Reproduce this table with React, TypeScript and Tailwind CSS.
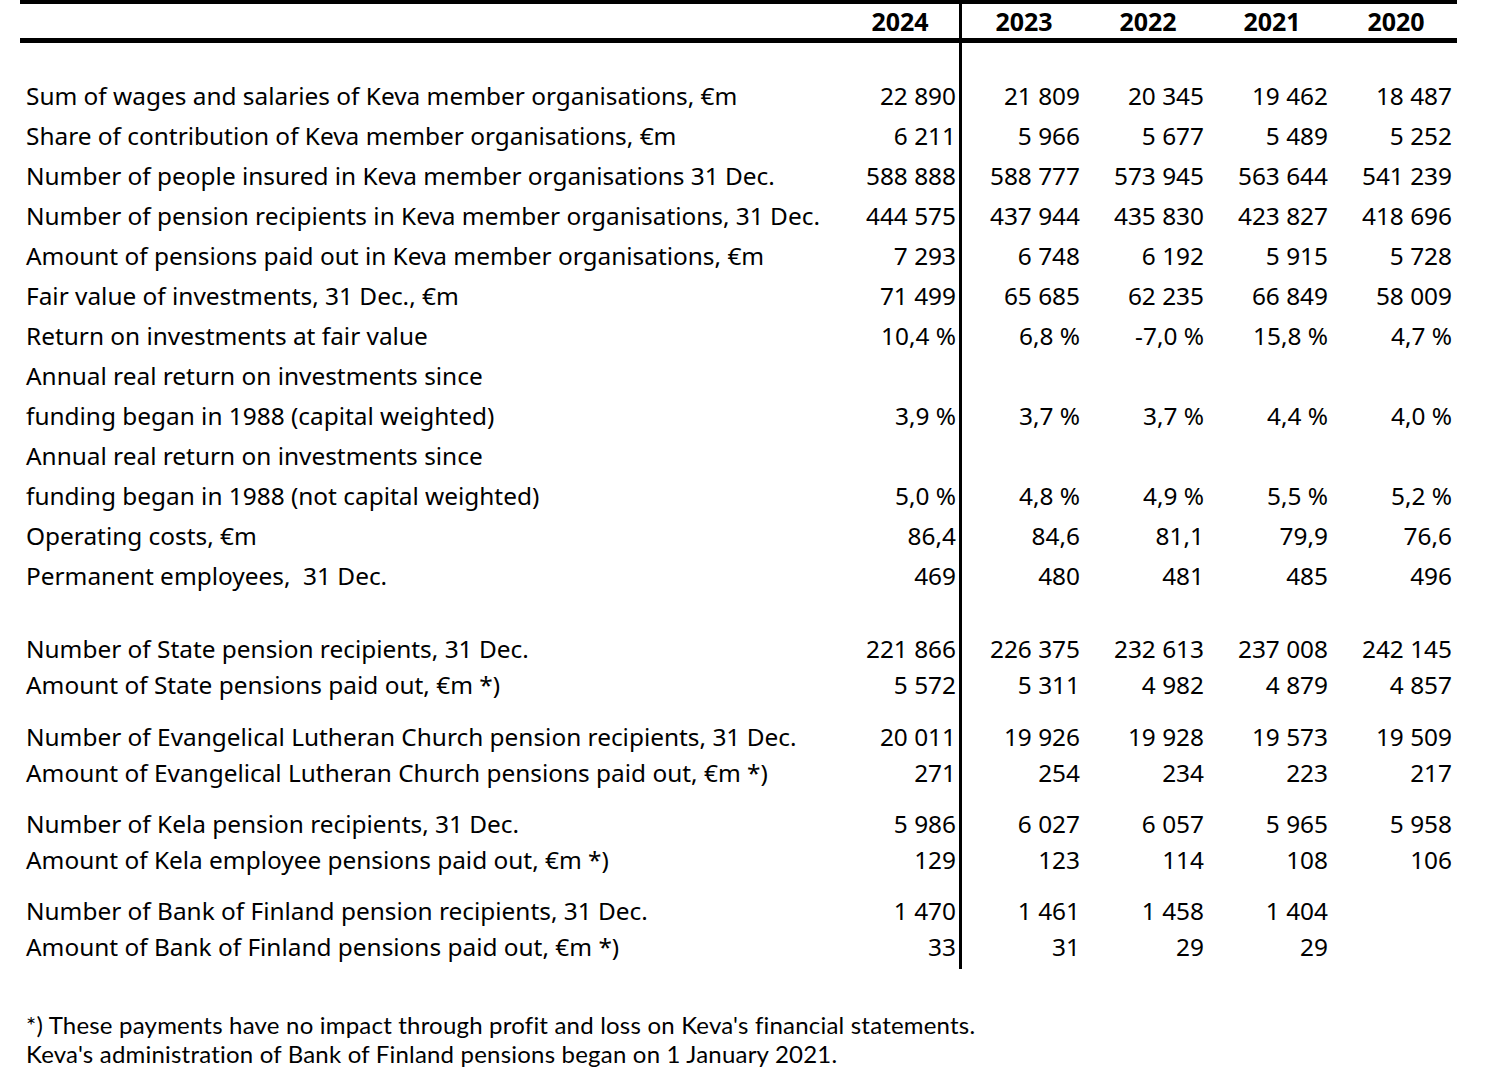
import React from "react";

type R = { label: string; v: string[] };

const block1: R[] = [
  { label: "Sum of wages and salaries of Keva member organisations, €m", v: ["22 890", "21 809", "20 345", "19 462", "18 487"] },
  { label: "Share of contribution of Keva member organisations, €m", v: ["6 211", "5 966", "5 677", "5 489", "5 252"] },
  { label: "Number of people insured in Keva member organisations 31 Dec.", v: ["588 888", "588 777", "573 945", "563 644", "541 239"] },
  { label: "Number of pension recipients in Keva member organisations, 31 Dec.", v: ["444 575", "437 944", "435 830", "423 827", "418 696"] },
  { label: "Amount of pensions paid out in Keva member organisations, €m", v: ["7 293", "6 748", "6 192", "5 915", "5 728"] },
  { label: "Fair value of investments, 31 Dec., €m", v: ["71 499", "65 685", "62 235", "66 849", "58 009"] },
  { label: "Return on investments at fair value", v: ["10,4 %", "6,8 %", "-7,0 %", "15,8 %", "4,7 %"] },
  { label: "Annual real return on investments since", v: ["", "", "", "", ""] },
  { label: "funding began in 1988 (capital weighted)", v: ["3,9 %", "3,7 %", "3,7 %", "4,4 %", "4,0 %"] },
  { label: "Annual real return on investments since", v: ["", "", "", "", ""] },
  { label: "funding began in 1988 (not capital weighted)", v: ["5,0 %", "4,8 %", "4,9 %", "5,5 %", "5,2 %"] },
  { label: "Operating costs, €m", v: ["86,4", "84,6", "81,1", "79,9", "76,6"] },
  { label: "Permanent employees,  31 Dec.", v: ["469", "480", "481", "485", "496"] },
];

const groups: { rows: R[]; gap: string }[] = [
  {
    gap: "h-[35px]",
    rows: [
      { label: "Number of State pension recipients, 31 Dec.", v: ["221 866", "226 375", "232 613", "237 008", "242 145"] },
      { label: "Amount of State pensions paid out, €m *)", v: ["5 572", "5 311", "4 982", "4 879", "4 857"] },
    ],
  },
  {
    gap: "h-[16px]",
    rows: [
      { label: "Number of Evangelical Lutheran Church pension recipients, 31 Dec.", v: ["20 011", "19 926", "19 928", "19 573", "19 509"] },
      { label: "Amount of Evangelical Lutheran Church pensions paid out, €m *)", v: ["271", "254", "234", "223", "217"] },
    ],
  },
  {
    gap: "h-[15px]",
    rows: [
      { label: "Number of Kela pension recipients, 31 Dec.", v: ["5 986", "6 027", "6 057", "5 965", "5 958"] },
      { label: "Amount of Kela employee pensions paid out, €m *)", v: ["129", "123", "114", "108", "106"] },
    ],
  },
  {
    gap: "h-[15px]",
    rows: [
      { label: "Number of Bank of Finland pension recipients, 31 Dec.", v: ["1 470", "1 461", "1 458", "1 404", ""] },
      { label: "Amount of Bank of Finland pensions paid out, €m *)", v: ["33", "31", "29", "29", ""] },
    ],
  },
];

const grid = "grid grid-cols-[817px_125px_124px_124px_124px_124px]";

function Row({ r, tall }: { r: R; tall: boolean }) {
  const h = tall ? "h-[40px] leading-[40px]" : "h-[36px] leading-[36px]";
  return (
    <div className={`${grid} ${h}`}>
      <div className="pl-[6px] whitespace-pre">{r.label}</div>
      <div className="border-r-[3px] border-black pr-[3px] text-right whitespace-nowrap">{r.v[0]}</div>
      {r.v.slice(1).map((x, i) => (
        <div key={i} className="pr-[6px] text-right whitespace-nowrap">
          {x}
        </div>
      ))}
    </div>
  );
}

function Spacer({ h }: { h: string }) {
  return (
    <div className={`${grid} ${h}`}>
      <div />
      <div className="border-r-[3px] border-black" />
      <div />
      <div />
      <div />
      <div />
    </div>
  );
}

export default function App() {
  const years = ["2023", "2022", "2021", "2020"];
  return (
    <div className="w-[1500px] h-[1069px] bg-white text-black overflow-hidden">
      <div
        className="pl-[20px] text-[24.4px]"
        style={{ fontFamily: '"Noto Sans", "Open Sans", sans-serif' }}
      >
        <div className="h-[4px] w-[1437px] bg-black" />
        <div className={`${grid} h-[34px] leading-[34px] font-bold text-[25px]`}>
          <div />
          <div className="border-r-[3px] border-black text-center pl-[4px]">2024</div>
          {years.map((y) => (
            <div key={y} className="text-center">
              {y}
            </div>
          ))}
        </div>
        <div className="h-[5px] w-[1437px] bg-black" />
        <Spacer h="h-[33px]" />
        {block1.map((r, i) => (
          <Row key={i} r={r} tall />
        ))}
        {groups.map((g, gi) => (
          <React.Fragment key={gi}>
            <Spacer h={g.gap} />
            {g.rows.map((r, i) => (
              <Row key={i} r={r} tall={false} />
            ))}
          </React.Fragment>
        ))}
        <Spacer h="h-[4px]" />
      </div>
      <div
        className="pl-[26px] pt-[41px] text-[24px] leading-[29px] tracking-[0.2px]"
        style={{ fontFamily: 'Lato, "Liberation Sans", sans-serif' }}
      >
        <div>*) These payments have no impact through profit and loss on Keva's financial statements.</div>
        <div>Keva's administration of Bank of Finland pensions began on 1 January 2021.</div>
      </div>
    </div>
  );
}
